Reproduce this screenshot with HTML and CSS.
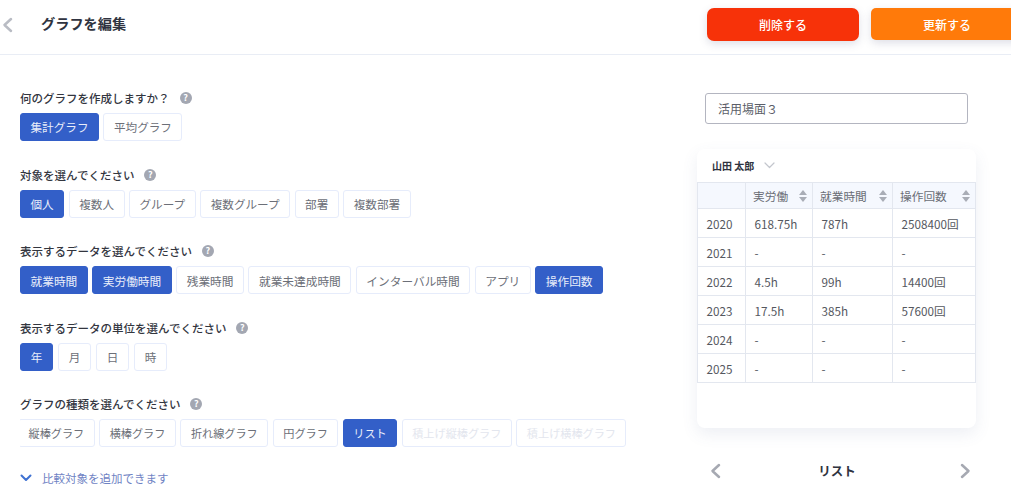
FILE: index.html
```html
<!DOCTYPE html>
<html lang="ja">
<head>
  <meta charset="UTF-8" />
  <meta name="viewport" content="width=device-width, initial-scale=1.0" />
  <title>グラフを編集</title>
  <link rel="stylesheet" href="styles.css">
</head>
<body>
  <header class="topbar">
    <svg class="back" width="12" height="16" viewBox="0 0 12 16"><path d="M10 2 L3.5 8 L10 14" /></svg>
    <h1>グラフを編集</h1>
    <button class="action delete">削除する</button>
    <button class="action update">更新する</button>
  </header>
  <div class="content">
    <main class="form">
      <section class="group">
        <h2>何のグラフを作成しますか？<span class="help">?</span></h2>
        <div class="options">
          <button class="opt on">集計グラフ</button>
          <button class="opt">平均グラフ</button>
        </div>
      </section>
      <section class="group">
        <h2>対象を選んでください<span class="help">?</span></h2>
        <div class="options">
          <button class="opt on">個人</button>
          <button class="opt">複数人</button>
          <button class="opt">グループ</button>
          <button class="opt">複数グループ</button>
          <button class="opt">部署</button>
          <button class="opt">複数部署</button>
        </div>
      </section>
      <section class="group">
        <h2>表示するデータを選んでください<span class="help">?</span></h2>
        <div class="options wide">
          <button class="opt on">就業時間</button>
          <button class="opt on">実労働時間</button>
          <button class="opt">残業時間</button>
          <button class="opt">就業未達成時間</button>
          <button class="opt">インターバル時間</button>
          <button class="opt">アプリ</button>
          <button class="opt on">操作回数</button>
        </div>
      </section>
      <section class="group">
        <h2>表示するデータの単位を選んでください<span class="help">?</span></h2>
        <div class="options units">
          <button class="opt on">年</button>
          <button class="opt">月</button>
          <button class="opt">日</button>
          <button class="opt">時</button>
        </div>
      </section>
      <section class="group">
        <h2>グラフの種類を選んでください<span class="help">?</span></h2>
        <div class="options clipped">
          <button class="opt">縦棒グラフ</button>
          <button class="opt">横棒グラフ</button>
          <button class="opt">折れ線グラフ</button>
          <button class="opt">円グラフ</button>
          <button class="opt on">リスト</button>
          <button class="opt off">積上げ縦棒グラフ</button>
          <button class="opt off">積上げ横棒グラフ</button>
        </div>
      </section>
      <a class="more">
        <svg width="12" height="8" viewBox="0 0 12 8"><path d="M1.5 1.5 L6 6 L10.5 1.5" /></svg>
        比較対象を追加できます
      </a>
    </main>
    <aside class="preview">
      <input class="name" type="text" value="活用場面３">
      <div class="card">
        <div class="person">山田 太郎
          <svg width="11" height="7" viewBox="0 0 11 7"><path d="M1 1 L5.5 5.5 L10 1" /></svg>
        </div>
        <table>
          <thead>
            <tr>
              <th></th>
              <th>実労働<span class="sort"></span></th>
              <th>就業時間<span class="sort"></span></th>
              <th>操作回数<span class="sort"></span></th>
            </tr>
          </thead>
          <tbody>
            <tr><td>2020</td><td>618.75h</td><td>787h</td><td>2508400回</td></tr>
            <tr><td>2021</td><td>-</td><td>-</td><td>-</td></tr>
            <tr><td>2022</td><td>4.5h</td><td>99h</td><td>14400回</td></tr>
            <tr><td>2023</td><td>17.5h</td><td>385h</td><td>57600回</td></tr>
            <tr><td>2024</td><td>-</td><td>-</td><td>-</td></tr>
            <tr><td>2025</td><td>-</td><td>-</td><td>-</td></tr>
          </tbody>
        </table>
      </div>
      <div class="pager">
        <svg width="12" height="16" viewBox="0 0 12 16"><path d="M10 2 L3.5 8 L10 14" /></svg>
        <span>リスト</span>
        <svg width="12" height="16" viewBox="0 0 12 16"><path d="M2 2 L8.5 8 L2 14" /></svg>
      </div>
    </aside>
  </div>
</body>
</html>
```

FILE: styles.css
```css
html, body {
  height: 100%;
}
body {
  margin: 0;
  font-family: "Noto Sans CJK JP", "Noto Sans", sans-serif;
  color: #2f3340;
  background: #fff;
  overflow: hidden;
}
button, input {
  font-family: inherit;
}
svg path {
  fill: none;
  stroke-linecap: round;
  stroke-linejoin: round;
}

/* top bar */
.topbar {
  display: flex;
  align-items: center;
  height: 54px;
  padding-left: 1px;
  border-bottom: 1px solid #e9edf5;
  overflow: hidden;
  box-sizing: content-box;
}
.back {
  margin-bottom: 4px;
}
.back path {
  stroke: #b9bcc4;
  stroke-width: 2.5;
}
.topbar h1 {
  flex: 1;
  margin: 0 0 8px 28px;
  font-size: 14.2px;
  line-height: 20px;
  font-weight: 700;
}
.action {
  flex: none;
  height: 32px;
  margin-bottom: 6px;
  border: 0;
  color: #fff;
  font-size: 12px;
  font-weight: 500;
  box-shadow: 0 3px 8px rgba(70, 80, 120, 0.18);
}
.delete {
  width: 152px;
  height: 33px;
  border-radius: 7px;
  background: #f73209;
}
.update {
  width: 152px;
  margin-left: 12px;
  margin-right: -12px;
  border-radius: 5px;
  background: #ff7a0a;
}

.content {
  display: flex;
  justify-content: space-between;
}

/* left form */
.form {
  padding: 34px 0 0 20px;
}
.group {
  height: 76.5px;
}
.group h2 {
  display: flex;
  align-items: center;
  margin: 0;
  height: 18px;
  font-size: 11.5px;
  line-height: 18px;
  font-weight: 500;
  color: #33363f;
}
.help {
  display: inline-block;
  width: 12px;
  height: 12px;
  margin-left: 10px;
  border-radius: 50%;
  background: #a3a7b2;
  color: #fff;
  font-size: 9px;
  line-height: 12px;
  font-weight: 700;
  text-align: center;
}
.options {
  display: flex;
  gap: 4.5px;
  margin-top: 6px;
}
.opt {
  height: 28px;
  padding: 0 9.5px;
  border: 1px solid #e6ecfb;
  border-radius: 3px;
  background: #fff;
  color: #6c6f78;
  font-size: 11.6px;
  white-space: nowrap;
}
.opt.on {
  background: #335fc8;
  border-color: #335fc8;
  color: #e9eefa;
}
.opt.off {
  color: #e3e6ee;
}
.wide .opt {
  font-size: 11.7px;
}
.units {
  gap: 5px;
}
.units .opt {
  width: 33px;
  padding: 0;
}
.clipped {
  overflow: hidden;
}
.clipped .opt {
  font-size: 11.15px;
}
.clipped .opt:first-child {
  margin-left: -2px;
}
.more {
  display: flex;
  align-items: center;
  gap: 10px;
  margin-top: -2px;
  font-size: 11.5px;
  color: #6f83c4;
}
.more path {
  stroke: #3f72d2;
  stroke-width: 2;
}

/* right preview */
.preview {
  flex: none;
  width: 279px;
  margin-right: 35px;
  padding-top: 38px;
}
.name {
  display: block;
  box-sizing: border-box;
  width: 263px;
  height: 31px;
  margin-left: 8px;
  padding: 0 12px;
  border: 1px solid #b3b5c0;
  border-radius: 3px;
  color: #5b5e68;
  font-size: 12px;
}
.card {
  height: 279px;
  margin-top: 25px;
  border-radius: 8px;
  background: #fff;
  box-shadow: 0 6px 16px rgba(80, 95, 150, 0.1);
  overflow: hidden;
}
.person {
  display: flex;
  align-items: center;
  gap: 10px;
  height: 33px;
  padding-left: 15px;
  font-size: 10px;
  font-weight: 700;
  color: #2f3340;
}
.person path {
  stroke: #c3c6cd;
  stroke-width: 1.2;
}
table {
  width: 279px;
  table-layout: fixed;
  border-collapse: collapse;
  font-size: 11.7px;
  color: #55585f;
}
th, td {
  box-sizing: border-box;
  border: 1px solid #e3e7ef;
  padding: 0 0 0 8.5px;
  text-align: left;
  font-weight: 400;
  white-space: nowrap;
}
th {
  position: relative;
  height: 26px;
  padding-left: 7px;
  background: #f5f8fe;
  color: #6b6e76;
}
td {
  height: 29px;
}
th:nth-child(1), td:nth-child(1) { width: 48px; }
th:nth-child(2), td:nth-child(2) { width: 67px; }
th:nth-child(3), td:nth-child(3) { width: 80px; }
.sort {
  position: absolute;
  right: 5px;
  top: 7px;
  width: 0;
  height: 0;
  border-left: 4px solid transparent;
  border-right: 4px solid transparent;
  border-bottom: 5.5px solid #a9adb6;
}
.sort::after {
  content: '';
  position: absolute;
  left: -4px;
  top: 6.5px;
  border-left: 4px solid transparent;
  border-right: 4px solid transparent;
  border-top: 5.5px solid #a9adb6;
}
.pager {
  display: flex;
  align-items: center;
  justify-content: space-between;
  margin-top: 33px;
  padding: 0 4px 0 12px;
  font-size: 12.5px;
  font-weight: 700;
  color: #2f3340;
}
.pager span {
  margin-right: 7px;
}
.pager path {
  stroke: #a6a9b2;
  stroke-width: 2.5;
}
```
